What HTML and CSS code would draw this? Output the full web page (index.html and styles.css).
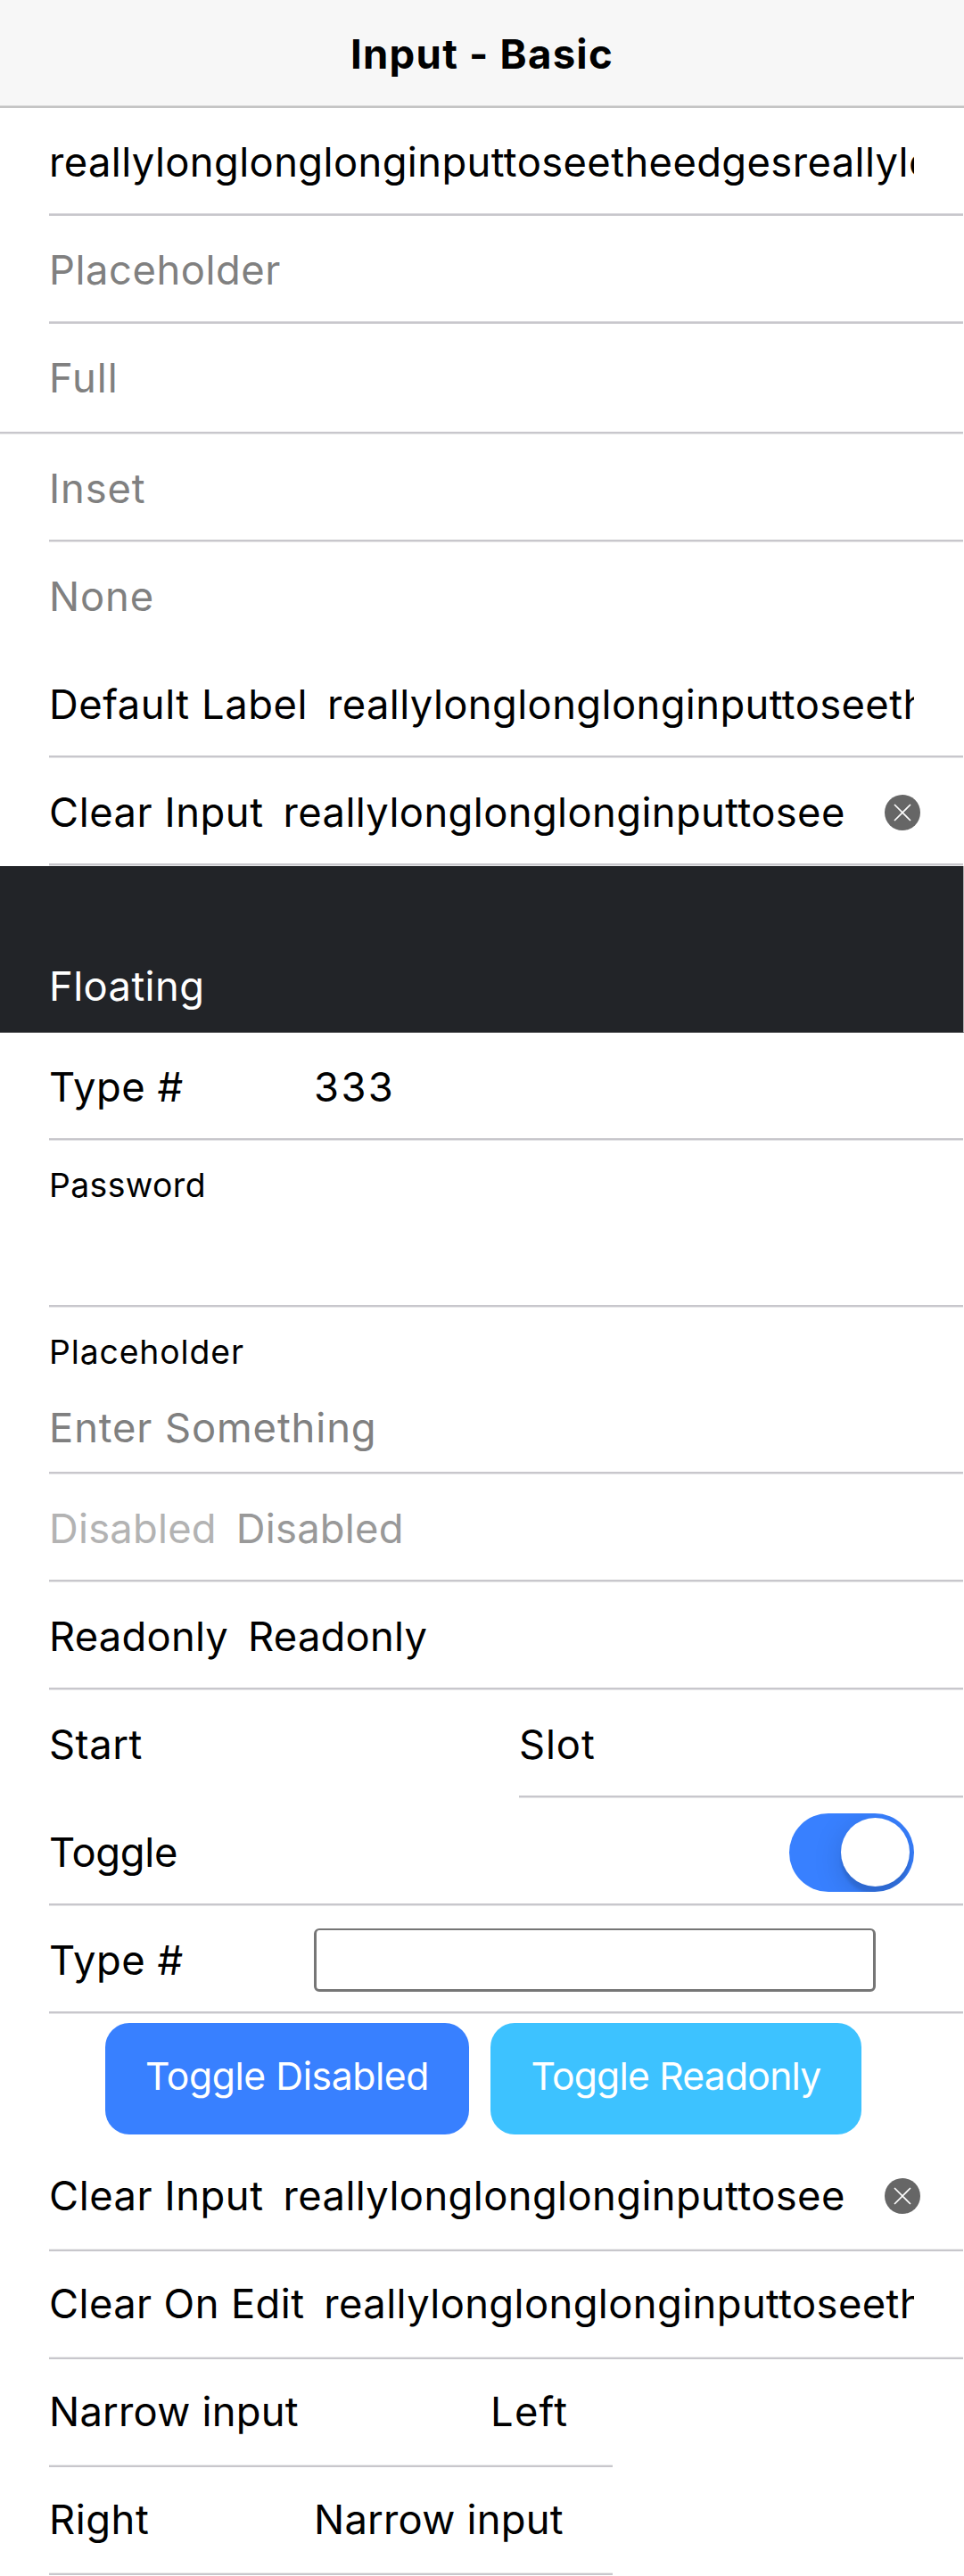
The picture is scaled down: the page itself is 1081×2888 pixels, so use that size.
FILE: index.html
```html
<!DOCTYPE html>
<html lang="en">
<head>
<meta charset="utf-8">
<title>Input - Basic</title>
<link rel="stylesheet" href="styles.css">
</head>
<body>
<header class="toolbar"><h1 class="title">Input - Basic</h1></header>
<main class="content">
  <div class="item high"><span class="value">reallylonglonglonginputtoseetheedgesreallylonglonglonginputtoseetheedges</span></div>
  <div class="item high"><span class="value hint track-m">Placeholder</span></div>
  <div class="item full"><span class="value hint track-l">Full</span></div>
  <div class="item"><span class="value hint track-l">Inset</span></div>
  <div class="item none"><span class="value hint track-l">None</span></div>
  <div class="item"><span class="label track-m">Default Label</span><span class="value">reallylonglonglonginputtoseetheedges</span></div>
  <div class="item"><span class="label track-m">Clear Input</span><span class="value">reallylonglonglonginputtosee</span><svg class="clear" viewBox="0 0 40 40"><circle cx="20" cy="20" r="20"/><path d="M11 11l18 18M29 11l-18 18"/></svg></div>
  <div class="item stacked dark"><span class="floating">Floating</span></div>
  <div class="item"><span class="label fixed track-m">Type #</span><span class="value track-xl">333</span></div>
  <div class="item stacked"><span class="small">Password</span></div>
  <div class="item stacked"><span class="small track-l">Placeholder</span><span class="entry hint track-l">Enter Something</span></div>
  <div class="item"><span class="label faint track-s">Disabled</span><span class="value dim track-s">Disabled</span></div>
  <div class="item"><span class="label track-s">Readonly</span><span class="value track-s">Readonly</span></div>
  <div class="item slot"><span class="start track-m">Start</span><span class="value lined track-l">Slot</span></div>
  <div class="item"><span class="value tight">Toggle</span><span class="toggle"><span class="knob"></span></span></div>
  <div class="item"><span class="label fixed track-m">Type #</span><span class="box"></span></div>
  <div class="actions"><button class="button primary">Toggle Disabled</button><button class="button secondary">Toggle Readonly</button></div>
  <div class="item low"><span class="label track-m">Clear Input</span><span class="value">reallylonglonglonginputtosee</span><svg class="clear" viewBox="0 0 40 40"><circle cx="20" cy="20" r="20"/><path d="M11 11l18 18M29 11l-18 18"/></svg></div>
  <div class="item low"><span class="label">Clear On Edit</span><span class="value">reallylonglonglonginputtoseetheedges</span></div>
  <div class="item low narrow"><span class="value track-s">Narrow input</span><span class="left">Left</span></div>
  <div class="item low narrow"><span class="label fixed track-m">Right</span><span class="value track-s">Narrow input</span></div>
</main>
</body>
</html>
```
FILE: styles.css
```css
* { box-sizing: border-box; }
body {
  margin: 0;
  width: 1081px;
  height: 2888px;
  overflow: hidden;
  background: #fff;
  color: #000;
  font: 45.3px/56px Inter, sans-serif;
  letter-spacing: .41px;
}
.toolbar {
  display: flex;
  align-items: center;
  justify-content: center;
  height: 121px;
  background: linear-gradient(#dcdcdc 1px, #c4c4c4 1px) bottom / 100% 3px no-repeat #f7f7f7;
}
.title { margin: 0; font-size: 45.5px; font-weight: 700; letter-spacing: 1.25px; }
.item {
  display: flex;
  align-items: center;
  width: 1025px;
  height: 121px;
  margin-left: 55px;
  padding-right: 55px;
  white-space: nowrap;
  background: linear-gradient(#c8c7cc 2px, #e6e6e8 2px) bottom / 100% 3px no-repeat;
}
.item.high { background-image: linear-gradient(#dad9dd 1px, #c8c7cc 1px); }
.item.low { padding-bottom: 4px; background-image: linear-gradient(#ededee 1px, #c8c7cc 1px); }
.item.full { width: 1080px; height: 124px; margin-left: 0; padding: 0 55px 3px; }
.item.none, .item.slot { background: none; }
.label { flex: none; margin-right: 22px; }
.fixed { width: 275px; }
.value { flex: 1; min-width: 0; overflow: hidden; }

/* Tracking steps */
.tight { letter-spacing: -.3px; }
.track-s { letter-spacing: .25px; }
.track-m { letter-spacing: .56px; }
.track-l { letter-spacing: .9px; }
.track-xl { letter-spacing: 2.4px; }

.hint { color: #808080; }
.faint { color: #b3b3b3; }
.dim { color: #999; }
.clear { flex: none; width: 40px; height: 40px; margin: 0 -7px 0 22px; }
.clear circle { fill: #666; }
.clear path { stroke: #fff; stroke-width: 1.6; }
.stacked {
  flex-direction: column;
  align-items: flex-start;
  height: 187px;
  padding-top: 26px;
}
.small { font-size: 37.3px; line-height: 47px; }
.entry { margin-top: 34px; }
.dark {
  width: 1081px;
  margin-left: 0;
  padding: 107px 55px 0;
  color: #fff;
  background: #222428;
  border-right: 1px solid #b0b0b2;
  border-bottom: 1px solid #606063;
}
.slot { padding: 0; }
.start { width: 527px; }
.lined {
  display: flex;
  align-items: center;
  height: 121px;
  background: linear-gradient(#c8c7cc 2px, #e6e6e8 2px) bottom / 100% 3px no-repeat;
}
.toggle {
  display: flex;
  justify-content: flex-end;
  width: 140px;
  height: 88px;
  padding: 5.5px;
  border-radius: 44px;
  overflow: hidden;
  background: #3880ff;
}
.knob {
  width: 77px;
  height: 77px;
  border-radius: 50%;
  background: #fff;
  box-shadow: 0 8px 33px rgba(0, 0, 0, .16), 0 8px 3px rgba(0, 0, 0, .1);
}
.box { width: 630px; height: 71px; border: 3px solid #767676; border-top-width: 2px; border-radius: 6px; }
.actions { display: flex; gap: 24px; height: 145px; padding: 10px 0 10px 118px; }
.button {
  height: 125px;
  padding: 0 0 6px;
  border: 0;
  border-radius: 27px;
  color: #fff;
  font: 42.7px/53px Inter, sans-serif;
}
.primary { width: 408px; background: #3880ff; letter-spacing: -.45px; }
.secondary { width: 416px; background: #3dc2ff; letter-spacing: -.8px; }
.item.narrow { width: 632px; padding-right: 50px; }
.left { width: 87px; margin-left: 16px; letter-spacing: 1.3px; }
```
